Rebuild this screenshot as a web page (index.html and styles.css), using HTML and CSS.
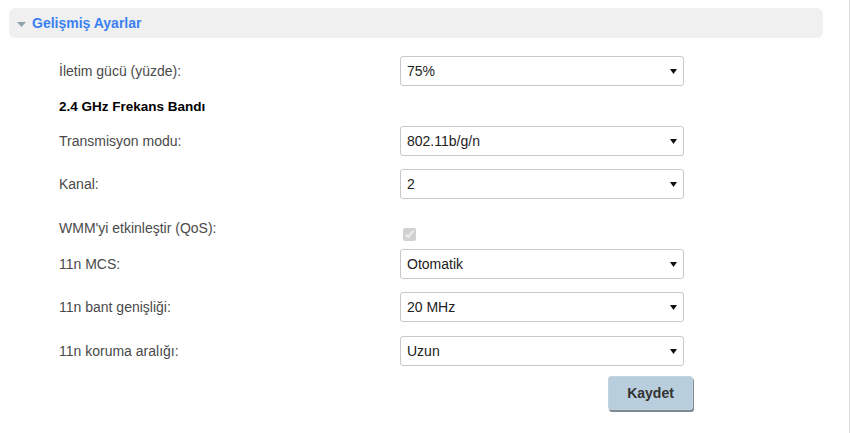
FILE: index.html
```html
<!DOCTYPE html>
<html lang="tr">
<head>
    <meta charset="UTF-8">
    <meta name="viewport" content="width=device-width, initial-scale=1.0">
    <title>Gelişmiş Ayarlar</title>
    <link rel="stylesheet" href="styles.css">
</head>
<body>
    <div class="page">
        <div class="section-header">
            <svg class="caret" width="9" height="5" viewBox="0 0 9 5"><polygon points="0,0 9,0 4.5,5" fill="#8fa2ad"/></svg>
            <span class="section-title">Gelişmiş Ayarlar</span>
        </div>

        <form class="settings">
            <div class="row">
                <label class="label">İletim gücü (yüzde):</label>
                <div class="select-wrap">
                    <select><option>75%</option></select>
                    <svg class="arrow" width="7" height="5" viewBox="0 0 7 5"><polygon points="0,0 7,0 3.5,5" fill="#111"/></svg>
                </div>
            </div>

            <div class="row heading-row">
                <div class="group-title">2.4 GHz Frekans Bandı</div>
            </div>

            <div class="row">
                <label class="label">Transmisyon modu:</label>
                <div class="select-wrap">
                    <select><option>802.11b/g/n</option></select>
                    <svg class="arrow" width="7" height="5" viewBox="0 0 7 5"><polygon points="0,0 7,0 3.5,5" fill="#111"/></svg>
                </div>
            </div>

            <div class="row">
                <label class="label">Kanal:</label>
                <div class="select-wrap">
                    <select><option>2</option></select>
                    <svg class="arrow" width="7" height="5" viewBox="0 0 7 5"><polygon points="0,0 7,0 3.5,5" fill="#111"/></svg>
                </div>
            </div>

            <div class="row check-row">
                <label class="label">WMM'yi etkinleştir (QoS):</label>
                <input type="checkbox" class="check" checked disabled>
            </div>

            <div class="row">
                <label class="label">11n MCS:</label>
                <div class="select-wrap">
                    <select><option>Otomatik</option></select>
                    <svg class="arrow" width="7" height="5" viewBox="0 0 7 5"><polygon points="0,0 7,0 3.5,5" fill="#111"/></svg>
                </div>
            </div>

            <div class="row">
                <label class="label">11n bant genişliği:</label>
                <div class="select-wrap">
                    <select><option>20 MHz</option></select>
                    <svg class="arrow" width="7" height="5" viewBox="0 0 7 5"><polygon points="0,0 7,0 3.5,5" fill="#111"/></svg>
                </div>
            </div>

            <div class="row last-row">
                <label class="label">11n koruma aralığı:</label>
                <div class="select-wrap">
                    <select><option>Uzun</option></select>
                    <svg class="arrow" width="7" height="5" viewBox="0 0 7 5"><polygon points="0,0 7,0 3.5,5" fill="#111"/></svg>
                </div>
            </div>

            <div class="actions">
                <button type="button" class="save">Kaydet</button>
            </div>
        </form>
    </div>
</body>
</html>
```

FILE: styles.css
```css
html, body {
    margin: 0;
    padding: 0;
    background: #fff;
}
body {
    font-family: "Liberation Sans", Arial, sans-serif;
    font-size: 14px;
    color: #333;
}
.page {
    width: 850px;
    height: 433px;
    border-right: 1px solid #dcdcdc;
    padding-top: 8px;
    box-sizing: border-box;
}
.section-header {
    margin-left: 9px;
    width: 814px;
    height: 30px;
    background: #f0f0f0;
    border-radius: 6px;
    display: flex;
    align-items: center;
    padding-left: 8px;
    box-sizing: border-box;
}
.caret {
    margin-right: 6px;
    margin-top: 2px;
}
.section-title {
    color: #3a80f0;
    font-weight: bold;
    font-size: 14px;
}
.settings {
    width: 634px;
    margin-left: 59px;
    padding-top: 18px;
    display: flex;
    flex-direction: column;
    gap: 13px;
}
.row {
    display: flex;
    align-items: center;
    height: 30px;
}
.last-row {
    margin-top: 1px;
}
.label {
    width: 341px;
    color: #4a4a4a;
}
.heading-row {
    height: 14px;
}
.group-title {
    font-weight: bold;
    font-size: 13.5px;
    color: #000;
}
.check-row {
    height: 24px;
    align-items: flex-start;
}
.check-row .label {
    padding-top: 8px;
}
.check {
    margin: 16px 0 0 3px;
    width: 13px;
    height: 13px;
}
.select-wrap {
    position: relative;
    width: 284px;
    height: 30px;
}
.select-wrap select {
    appearance: none;
    -webkit-appearance: none;
    width: 100%;
    height: 100%;
    border: 1px solid #c8c8c8;
    border-radius: 3px;
    background: #fff;
    padding: 0 0 0 6px;
    font-family: inherit;
    font-size: 14px;
    color: #222;
    margin: 0;
}
.arrow {
    position: absolute;
    right: 7px;
    top: 13px;
    pointer-events: none;
}
.actions {
    display: flex;
    justify-content: flex-end;
    margin-top: -3px;
}
.save {
    width: 85px;
    height: 34px;
    background: #b9cedd;
    border: 1px solid #c5d3dd;
    border-radius: 3px;
    box-shadow: 1px 2px 0 #7d8a93;
    font-family: inherit;
    font-weight: bold;
    font-size: 14px;
    color: #333;
    padding: 0;
}
```
